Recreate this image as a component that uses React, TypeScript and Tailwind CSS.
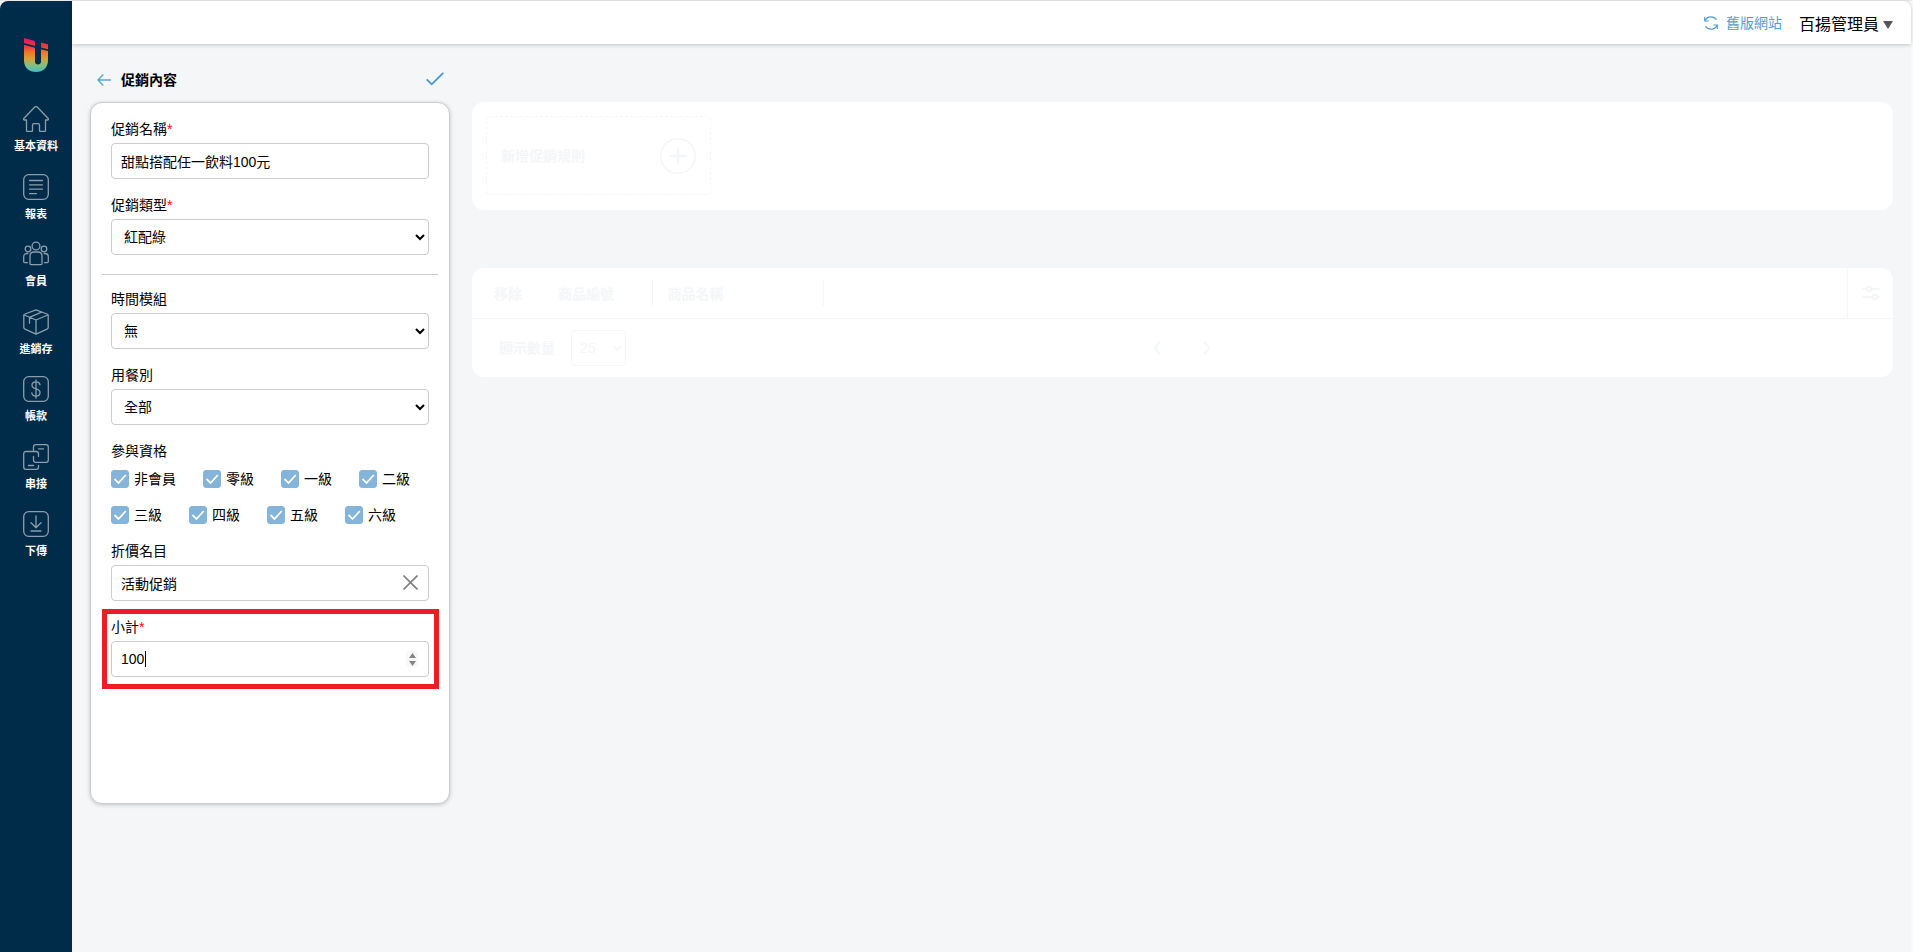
import { useState } from "react";
import type { ReactNode } from "react";

const navItems: { label: string; icon: ReactNode }[] = [
  {
    label: "基本資料",
    icon: <path d="M3.5 14v10.2c0 .8.5 1.3 1.3 1.3h3.7c.7 0 1-.4 1-1v-5.300c0-1 .5-1.500 1.500-1.500h4c1 0 1.500.5 1.500 1.500v5.300c0 .6.3 1 1 1h3.700c.8 0 1.300-.5 1.300-1.300V14h1.800c1.200 0 1.500-1 .7-1.800L14.200 1c-.8-.7-1.600-.7-2.400 0L1 12.200c-.8.8-.5 1.800.7 1.800z" />,
  },
  {
    label: "報表",
    icon: (
      <>
        <rect x="0.700" y="0.700" width="24.600" height="24.600" rx="5" />
        <path d="M6.500 6.500h13M6.500 10.800h13M6.500 15.200h13M6.500 19.600h7" />
      </>
    ),
  },
  {
    label: "會員",
    icon: (
      <>
        <circle cx="13" cy="5" r="3.900" />
        <circle cx="5" cy="8" r="2.800" />
        <circle cx="21" cy="8" r="2.800" />
        <path d="M7 22.500V15c0-2.500 1.500-4 4-4h4c2.500 0 4 1.500 4 4v7.500c0 .8-.4 1.200-1.200 1.200H8.200c-.8 0-1.200-.4-1.200-1.200z" />
        <path d="M4.800 12.500H4c-2 0-3.300 1.300-3.300 3.300v4.700c0 .8.4 1.200 1.200 1.200H4.500M21.200 12.500h.8c2 0 3.300 1.300 3.300 3.300v4.700c0 .8-.4 1.200-1.200 1.200h-2.600" />
      </>
    ),
  },
  {
    label: "進銷存",
    icon: (
      <>
        <path d="M13 .8 24 5c.8.3 1.200.8 1.200 1.600v12c0 .8-.4 1.300-1.200 1.600l-11 5-11-5c-.8-.3-1.200-.8-1.200-1.600v-12C.8 5.800 1.200 5.300 2 5z" />
        <path d="M1.200 6 13 11 24.800 6M13 11v14M6.500 8.300v6M6.500 8.300 18.500 3.200" />
      </>
    ),
  },
  {
    label: "帳款",
    icon: (
      <>
        <rect x="0.700" y="0.700" width="24.600" height="24.600" rx="5" />
        <path d="M17 8.800c-.3-1.800-1.800-2.900-4-2.900s-4 1.200-4 3.400c0 4.700 8 2.600 8 7.200 0 2.300-1.700 3.600-4 3.600s-4-1.200-4.200-3.300M13 3.800v18.400" />
      </>
    ),
  },
  {
    label: "串接",
    icon: (
      <>
        <path d="M10.500 6.500V3c0-1.500.8-2.300 2.300-2.300H23c1.500 0 2.300.8 2.300 2.300v13c0 1.500-.8 2.300-2.300 2.300h-4.500M15.500 4.800h5" />
        <path d="M15.500 12.500V9.800c0-1.500-.8-2.300-2.300-2.300H3C1.500 7.500.7 8.300.7 9.800V23c0 1.500.8 2.300 2.300 2.300h10.200c1.500 0 2.300-.8 2.300-2.300v-1.500M10.500 12.500v3.500c0 1.500.8 2.300 2.300 2.300h5.700M5.500 21.500h5" />
      </>
    ),
  },
  {
    label: "下傳",
    icon: (
      <>
        <rect x="0.700" y="0.700" width="24.600" height="24.600" rx="5" />
        <path d="M13 5v11.500M8 11.800l5 4.900 5-4.900M8 20h10" />
      </>
    ),
  },
];

const levels = ["非會員", "零級", "一級", "二級", "三級", "四級", "五級", "六級"];

const inputClass = "block h-9 w-full rounded-[4px] border border-[#ccc] bg-white px-[9px] text-sm text-black outline-none";
const selectClass = "block h-9 w-full rounded-[4px] border border-[#ccc] bg-white px-2 text-sm text-black outline-none";

function Logo() {
  return (
    <svg width="24" height="34" viewBox="0 0 24 34" aria-hidden="true">
      <defs>
        <linearGradient id="logo" x1="0" y1="0" x2="0" y2="34" gradientUnits="userSpaceOnUse">
          <stop offset="0" stopColor="#e0146c" />
          <stop offset="0.25" stopColor="#ee3a3a" />
          <stop offset="0.42" stopColor="#f0762a" />
          <stop offset="0.62" stopColor="#d3a338" />
          <stop offset="0.8" stopColor="#84bf82" />
          <stop offset="1" stopColor="#3fbfc4" />
        </linearGradient>
      </defs>
      <g fill="url(#logo)">
        <path d="M0 0 11 3v5L0 5z" />
        <path d="M17 4.500 24 6.200v5L17 9.500z" />
        <path d="M0 6.800 11 9.800V23.500c0 1.800 1.200 3 3 3s3-1.200 3-3V11.300L24 13v9.500C24 29.500 19.200 34 12 34S0 29.500 0 22.500z" />
      </g>
    </svg>
  );
}

function Field({ id, label, required, children }: { id: string; label: string; required?: boolean; children: ReactNode }) {
  return (
    <div>
      <label htmlFor={id} className="mb-1 block text-sm leading-5">
        {label}
        {required ? <span className="text-[#f00]">*</span> : null}
      </label>
      {children}
    </div>
  );
}

export default function App() {
  const [name, setName] = useState("甜點搭配任一飲料100元");
  const [discount, setDiscount] = useState("活動促銷");
  const [subtotal, setSubtotal] = useState(100);

  return (
    <div className="flex min-h-screen border-t border-r-2 border-t-[#e8e8e6] border-r-[#fafafa] bg-[#f4f6f8] font-['Liberation_Sans','Noto_Sans_CJK_TC',sans-serif] text-black">
      <aside className="w-[72px] shrink-0 rounded-tl-lg bg-[#002b49]">
        <a href="#" aria-label="首頁" className="mt-[37px] flex justify-center">
          <Logo />
        </a>
        <nav className="mt-[34px] flex h-[453px] flex-col justify-between">
          {navItems.map((item) => (
            <a key={item.label} href="#" className="flex h-12 flex-col items-center gap-1.5 text-[11px] leading-4 font-bold text-white">
              <svg width="26" height="26" viewBox="0 0 26 26" fill="none" stroke="#8c9dac" strokeWidth="1.300" strokeLinecap="round" strokeLinejoin="round">
                {item.icon}
              </svg>
              {item.label}
            </a>
          ))}
        </nav>
      </aside>

      <div className="min-w-0 flex-1">
        <header className="flex h-[43px] items-center justify-end rounded-tr-lg bg-white pr-[18px] shadow-[0_1px_4px_rgba(0,0,0,0.2)]">
          <a href="#" className="flex items-center gap-2 text-sm leading-5 text-[#4f9fd3]">
            <svg width="14" height="14" viewBox="0 0 14 14" fill="none" stroke="currentColor" strokeWidth="1.200">
              <path d="M.7 1v4h4M1 4.800C2 2.300 4.200.9 7 .9c2.400 0 4.300 1 5.500 2.900M13.300 13V9h-4M13 9.200c-1 2.500-3.200 3.900-6 3.900-2.400 0-4.300-1-5.500-2.900" />
            </svg>
            舊版網站
          </a>
          <button type="button" className="ml-[17px] flex items-center gap-1 pt-1 text-base leading-6">
            百揚管理員
            <svg width="10" height="8" viewBox="0 0 10 8" fill="#555">
              <path d="M0 0h10L5 8z" />
            </svg>
          </button>
        </header>

        <main className="flex items-start gap-[22px] px-[18px]">
          <section className="w-[360px] shrink-0">
            <div className="flex h-[58px] items-center gap-2.5 pt-3.5 pr-1.5 pl-[7px]">
              <button type="button" aria-label="返回">
                <svg width="14" height="12" viewBox="0 0 14 12" fill="none" stroke="#5ba5d6" strokeWidth="1.400">
                  <path d="M14 6H1M6.300.6.900 6l5.400 5.400" />
                </svg>
              </button>
              <h1 className="text-sm leading-5 font-bold">促銷內容</h1>
              <button type="button" aria-label="儲存" className="mb-0.5 ml-auto">
                <svg width="18" height="14" viewBox="0 0 18 14" fill="none" stroke="#4696d0" strokeWidth="1.800">
                  <path d="m.7 7.300 5 5L17.300.8" />
                </svg>
              </button>
            </div>

            <form className="min-h-[702px] rounded-xl border border-[#ccc] bg-white px-5 pt-4 shadow-[0_1px_4px_rgba(0,0,0,0.2)]">
              <div className="space-y-4">
                <Field id="name" label="促銷名稱" required>
                  <input id="name" value={name} onChange={(event) => setName(event.target.value)} className={inputClass} />
                </Field>
                <Field id="type" label="促銷類型" required>
                  <select id="type" className={selectClass}>
                    <option>紅配綠</option>
                  </select>
                </Field>
              </div>
              <hr className="-mx-[9px] mt-[19px] mb-3.5 border-[#ccc]" />
              <div className="space-y-4">
                <Field id="time" label="時間模組">
                  <select id="time" className={selectClass}>
                    <option>無</option>
                  </select>
                </Field>
                <Field id="meal" label="用餐別">
                  <select id="meal" className={selectClass}>
                    <option>全部</option>
                  </select>
                </Field>
                <fieldset>
                  <legend className="mb-2 text-sm leading-5">參與資格</legend>
                  <div className="flex flex-wrap gap-x-[27px] gap-y-4">
                    {levels.map((level) => (
                      <label key={level} className="flex items-center gap-[5px] text-sm leading-5">
                        <span className="relative size-[18px]">
                          <input type="checkbox" defaultChecked className="peer block size-[18px] appearance-none rounded-[3px] border border-[#84b4d9] bg-white checked:bg-[#84b4d9]" />
                          <svg className="pointer-events-none absolute inset-0 hidden peer-checked:block" width="18" height="18" viewBox="0 0 18 18" fill="none" stroke="#fff" strokeWidth="1.800">
                            <path d="m3.500 9 4 4 7.300-8" />
                          </svg>
                        </span>
                        {level}
                      </label>
                    ))}
                  </div>
                </fieldset>
                <Field id="discount" label="折價名目">
                  <div className="relative">
                    <input id="discount" value={discount} onChange={(event) => setDiscount(event.target.value)} className={inputClass} />
                    <button type="button" aria-label="清除" onClick={() => setDiscount("")} className="absolute top-2.5 right-[11px]">
                      <svg width="15" height="15" viewBox="0 0 15 15" fill="none" stroke="#808080" strokeWidth="1.600">
                        <path d="m.5.5 14 14M14.500.5l-14 14" />
                      </svg>
                    </button>
                  </div>
                </Field>
                <div className="relative">
                  <Field id="subtotal" label="小計" required>
                    <div className="relative">
                      <input
                        id="subtotal"
                        type="number"
                        value={subtotal}
                        onChange={(event) => setSubtotal(Number(event.target.value))}
                        className="block h-9 w-full appearance-none rounded-[4px] border border-[#ccc] bg-white px-[9px] text-sm text-black outline-none [-moz-appearance:textfield] [&::-webkit-inner-spin-button]:appearance-none"
                      />
                      <span className="absolute top-2.5 left-[34px] h-4 w-px bg-black" />
                      <span className="absolute top-2.5 right-[11px] flex h-4 w-3 flex-col items-center justify-center gap-[3px] bg-[#f8f8f8]">
                        <button type="button" aria-label="增加" onClick={() => setSubtotal(subtotal + 1)}>
                          <svg className="block" width="7" height="5" viewBox="0 0 7 5" fill="#858585"><path d="M3.500 0 7 5H0z" /></svg>
                        </button>
                        <button type="button" aria-label="減少" onClick={() => setSubtotal(subtotal - 1)}>
                          <svg className="block" width="7" height="5" viewBox="0 0 7 5" fill="#858585"><path d="M3.500 5 7 0H0z" /></svg>
                        </button>
                      </span>
                    </div>
                  </Field>
                  <div className="pointer-events-none absolute -top-2 -right-2.5 -bottom-3 -left-[9px] border-[5px] border-[#ee1c25]" />
                </div>
              </div>
            </form>
          </section>

          <section className="min-w-0 flex-1 pt-[58px] text-sm text-[#f4f6f8]">
            <div className="rounded-xl bg-white px-3.5 pt-3.5 pb-[15px]">
              <button type="button" className="flex h-[79px] w-[225px] items-center justify-between rounded-[4px] border border-dashed border-[#f4f6f8] px-3.5 font-bold">
                新增促銷規則
                <svg width="36" height="36" viewBox="0 0 36 36" fill="none" stroke="#f4f6f8">
                  <circle cx="18" cy="18" r="17.300" strokeWidth="1.500" />
                  <path d="M18 9.500v17M9.500 18h17" strokeWidth="2.500" />
                </svg>
              </button>
            </div>

            <div className="mt-[58px] rounded-xl bg-white">
              <div className="flex h-[51px] items-center border-b border-[#f4f6f8]">
                <table className="text-left leading-6 font-bold">
                  <thead>
                    <tr>
                      <th className="w-[86px] pt-0.5 pl-[22px]">移除</th>
                      <th className="w-[94px] border-r border-[#f4f6f8] pt-0.5">商品編號</th>
                      <th className="w-[171px] border-r border-[#f4f6f8] pt-0.5 pl-[15px]">商品名稱</th>
                    </tr>
                  </thead>
                </table>
                <button type="button" aria-label="欄位設定" className="ml-auto flex h-full w-[46px] items-center justify-center border-l border-[#f4f6f8]">
                  <svg width="18" height="16" viewBox="0 0 18 16" fill="none" stroke="#f4f6f8" strokeWidth="2" strokeLinecap="round">
                    <path d="M1 4h3.500M9.500 4H17M1 12h9.500M15.500 12H17" />
                    <circle cx="7" cy="4" r="2.300" />
                    <circle cx="13" cy="12" r="2.300" />
                  </svg>
                </button>
              </div>
              <div className="grid h-[58px] grid-cols-3 items-center">
                <div className="flex items-center gap-4 pl-[27px]">
                  <label htmlFor="size" className="font-bold">顯示數量</label>
                  <select id="size" className="h-9 w-[55px] rounded-[4px] border border-[#f4f6f8] bg-white px-1">
                    <option>25</option>
                  </select>
                </div>
                <div className="flex justify-center gap-[42px]">
                  <button type="button" aria-label="上一頁">
                    <svg width="8" height="14" viewBox="0 0 8 14" fill="none" stroke="#f4f6f8" strokeWidth="2"><path d="M7 1 1.500 7 7 13" /></svg>
                  </button>
                  <button type="button" aria-label="下一頁">
                    <svg width="8" height="14" viewBox="0 0 8 14" fill="none" stroke="#f4f6f8" strokeWidth="2"><path d="m1 1 5.500 6L1 13" /></svg>
                  </button>
                </div>
              </div>
            </div>
          </section>
        </main>
      </div>
    </div>
  );
}
